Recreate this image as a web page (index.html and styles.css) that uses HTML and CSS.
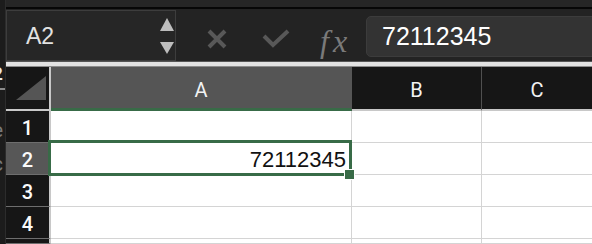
FILE: index.html
```html
<!DOCTYPE html>
<html lang="en">
<head>
  <meta charset="UTF-8" />
  <meta name="viewport" content="width=device-width, initial-scale=1.0"/>
  <title>Sheet</title>
  <link rel="stylesheet" href="styles.css">
</head>
<body>

  <div class="app">
    <div class="side">
      <span class="frag frag-2">2</span>
      <span class="frag-bar"></span>
      <span class="frag frag-e">e</span>
      <span class="frag frag-c">c</span>
    </div>

    <div class="main">
      <div class="titlebar"></div>

      <div class="toolbar">
        <div class="namebox">
          <span class="cellref">A2</span>
          <svg class="spinner" width="14" height="36" viewBox="0 0 14 36">
            <polygon points="7,0 14,13 0,13" />
            <polygon points="0,24 14,24 7,36" />
          </svg>
        </div>

        <svg class="icon cancel" width="24" height="24" viewBox="0 0 24 24">
          <path d="M4 4 L20 20 M20 4 L4 20" />
        </svg>
        <svg class="icon enter" width="32" height="24" viewBox="0 0 32 24">
          <path d="M4 9 L13 18 L28 4" />
        </svg>
        <span class="fx"><span class="fx-f">f</span>x</span>

        <div class="formula">72112345</div>
      </div>

      <div class="divider"></div>

      <div class="sheet">
        <div class="corner">
          <svg width="30" height="24" viewBox="0 0 30 24">
            <polygon points="30,0 30,24 0,24" />
          </svg>
        </div>
        <div class="colhead active">A</div>
        <div class="colhead">B</div>
        <div class="colhead last">C</div>

        <div class="rowhead">1</div>
        <div class="cell"></div>
        <div class="cell"></div>
        <div class="cell last"></div>

        <div class="rowhead active">2</div>
        <div class="cell selected">
          <span class="value">72112345</span>
          <div class="selection"><div class="handle"></div></div>
        </div>
        <div class="cell"></div>
        <div class="cell last"></div>

        <div class="rowhead">3</div>
        <div class="cell"></div>
        <div class="cell"></div>
        <div class="cell last"></div>

        <div class="rowhead">4</div>
        <div class="cell"></div>
        <div class="cell"></div>
        <div class="cell last"></div>

        <div class="rowhead"></div>
        <div class="cell"></div>
        <div class="cell"></div>
        <div class="cell last"></div>
      </div>
    </div>
  </div>

</body>
</html>
```

FILE: styles.css
```css
* {
  box-sizing: border-box;
}

body {
  margin: 0;
  width: 592px;
  height: 244px;
  overflow: hidden;
  background: #1b1b1b;
  font-family: 'Liberation Sans', Arial, sans-serif;
}

.app {
  display: flex;
  height: 244px;
}

/* strip of the window behind, cut off at the left edge */
.side {
  width: 6px;
  flex-shrink: 0;
  background: #1c1c1c;
  border-right: 1px solid #2c2c2c;
  overflow: hidden;
  display: flex;
  flex-direction: column;
  align-items: flex-end;
}

.frag {
  font-family: Roboto, sans-serif;
  line-height: 1;
  margin-right: 2px;
}

.frag-2 {
  margin-top: 64px;
  font-size: 19px;
  font-weight: bold;
  color: #e8e8e8;
}

.frag-bar {
  width: 5px;
  height: 2px;
  margin-top: 5px;
  background: #8a8a8a;
}

.frag-e {
  margin-top: 30px;
  font-size: 20px;
  color: #7a7a7a;
}

.frag-c {
  margin-top: 14px;
  font-size: 20px;
  color: #7a7a7a;
}

.main {
  flex: 1;
  min-width: 0;
}

.titlebar {
  height: 9px;
  background: #262626;
  border-bottom: 2px solid #070707;
}

.toolbar {
  height: 52px;
  background: #232323;
  display: flex;
  align-items: flex-start;
}

.namebox {
  width: 170px;
  height: 51px;
  margin-top: 1px;
  background: #262626;
  border: 1px solid #3d3d3d;
  display: flex;
  align-items: center;
  padding-left: 19px;
  padding-right: 1px;
}

.cellref {
  font-size: 23px;
  color: #e2e2e2;
  padding-top: 1px;
}

.spinner {
  margin-left: auto;
  fill: #bdbdbd;
}

.icon path {
  fill: none;
  stroke: #585858;
  stroke-width: 4;
}

.cancel {
  margin-left: 29px;
  margin-top: 18px;
}

.enter {
  margin-left: 31px;
  margin-top: 18px;
}

.fx {
  width: 32px;
  margin-left: 28px;
  margin-top: 14px;
  font-family: 'Liberation Serif', 'Times New Roman', serif;
  font-style: italic;
  font-size: 32px;
  line-height: 36px;
  color: #7a7a7a;
  white-space: nowrap;
}

.fx-f {
  margin-right: 4px;
}

.formula {
  flex: 1;
  margin-left: 14px;
  margin-right: -10px;
  margin-top: 7px;
  height: 41px;
  background: #333333;
  border: 1px solid #3c3c3c;
  border-radius: 5px;
  padding-left: 15px;
  font-size: 25px;
  line-height: 39px;
  color: #ffffff;
}

.divider {
  height: 6px;
  background: #e2e2e2;
  border-top: 1px solid #555;
  border-bottom: 1px solid #8c8c8c;
}

.sheet {
  display: grid;
  grid-template-columns: 45px 301px 130px 1fr;
  grid-template-rows: 44px repeat(4, 32px) 5px;
  font-family: Roboto, sans-serif;
}

.corner {
  background: #161616;
  border-right: 2px solid #c8c8c8;
  border-bottom: 2px solid #c8c8c8;
  display: flex;
  align-items: flex-end;
  justify-content: flex-end;
  padding: 0 3px 9px 0;
}

.corner polygon {
  fill: #555;
}

.colhead {
  background: #161616;
  color: #f2f2f2;
  font-size: 20px;
  display: flex;
  align-items: center;
  justify-content: center;
  padding-top: 4px;
  border-right: 1px solid #505050;
  border-bottom: 2px solid #c8c8c8;
}

.colhead.active {
  background: #555;
  border-right-color: #555;
  border-bottom: 3px solid #386b47;
}

.colhead.last {
  border-right: none;
}

.rowhead {
  background: #161616;
  color: #fafafa;
  font-size: 20px;
  font-weight: 500;
  display: flex;
  align-items: center;
  justify-content: center;
  padding-top: 3px;
  border-right: 2px solid #c8c8c8;
  border-bottom: 1px solid #6e6e6e;
}

.rowhead.active {
  background: #575757;
}

.cell {
  background: #fff;
  border-right: 1px solid #d4d4d4;
  border-bottom: 1px solid #d4d4d4;
}

.cell.last {
  border-right: none;
}

.cell.selected {
  position: relative;
  z-index: 1;
  display: flex;
  align-items: center;
  justify-content: flex-end;
  padding: 2px 5px 0 0;
}

.value {
  font-family: 'Liberation Sans', Arial, sans-serif;
  font-size: 22px;
  color: #111;
}

.selection {
  position: absolute;
  left: -3px;
  top: -3px;
  right: -1px;
  bottom: -2px;
  border: 3px solid #386b47;
}

.handle {
  position: absolute;
  right: -6px;
  bottom: -7px;
  width: 11px;
  height: 11px;
  background: #386b47;
  border: 1px solid #fff;
}
```
